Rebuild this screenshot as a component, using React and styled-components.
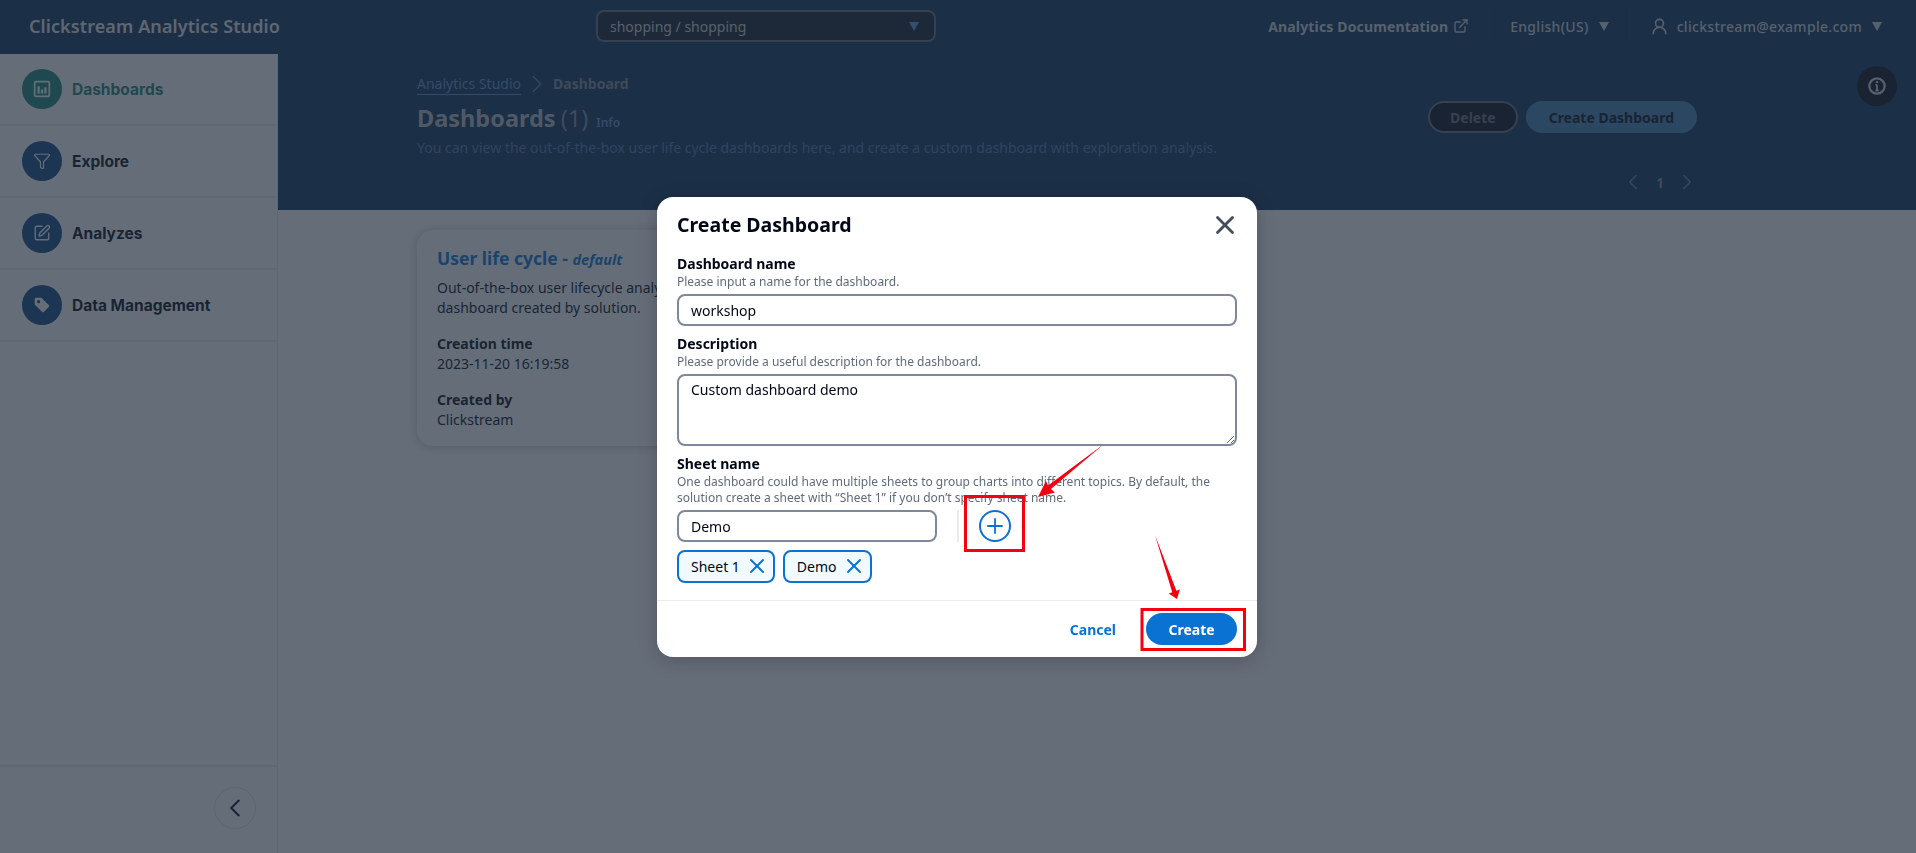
import React from 'react';
import styled, { createGlobalStyle } from 'styled-components';
import { ExternalLink, Funnel, SquarePen, X, Plus, ChevronLeft, ChevronRight, UserRound } from 'lucide-react';

const GlobalStyle = createGlobalStyle`
    html, body { margin:0; padding:0; height:100%; }
    body { font-family:"Noto Sans", "Open Sans", sans-serif; color:#000716; background:#fff; overflow:hidden; }
    * { box-sizing:border-box; }
`;

const Page = styled.div`
    height:100vh;
    display:flex;
    flex-direction:column;
`;

/* top navigation */
const TopBar = styled.header`
    height:54px;
    flex:none;
    background:#08305a;
    display:flex;
    align-items:center;
    padding:0 34px 2px 29px;
    color:#fff;
`;
const Brand = styled.div`
    width:567px;
    font-size:18px;
    font-weight:600;
    letter-spacing:0.1px;
    color:#e6e8ea;
`;
const ProjectSelect = styled.div`
    width:340px;
    height:32px;
    border-radius:8px;
    border:2px solid #5f6b7a;
    background:#0f1b2a;
    display:flex;
    align-items:center;
    justify-content:space-between;
    padding:0 15px 0 12px;
    font-size:14px;
    color:#d1d5db;
`;
const TopRight = styled.div`
    margin-left:auto;
    display:flex;
    align-items:center;
    font-size:14px;
    color:#d1d5db;
`;
const TopItem = styled.div`
    display:flex;
    align-items:center;
    gap:${(p) => p.$gap || 8}px;
    height:36px;
    padding:0 20px;
    font-weight:${(p) => p.$weight || 500};
    letter-spacing:${(p) => p.$spacing || 0.3}px;
    & + & { border-left:1px solid #0d3a6c; }
    &:last-child { padding-right:0; }
`;
const Caret = styled.span`
    width:0;
    height:0;
    border-left:5px solid transparent;
    border-right:5px solid transparent;
    border-top:9px solid ${(p) => p.$color || '#d1d5db'};
    margin-left:${(p) => p.$gap || 0}px;
`;

/* body */
const Body = styled.div`
    flex:1;
    display:flex;
    min-height:0;
    position:relative;
`;
const Sidebar = styled.aside`
    width:278px;
    flex:none;
    border-right:1px solid #e9ebed;
    display:flex;
    flex-direction:column;
`;
const NavItem = styled.div`
    height:72px;
    display:flex;
    align-items:center;
    gap:10px;
    padding:0 0 0 22px;
    border-bottom:2px solid #e9ebed;
    font-family:Inter, sans-serif;
    font-size:15.5px;
    font-weight:700;
    color:${(p) => (p.$active ? '#1a7f78' : '#000716')};
`;
const NavIcon = styled.span`
    width:40px;
    height:40px;
    border-radius:50%;
    background:${(p) => (p.$active ? '#1a8478' : '#0b4480')};
    color:#fff;
    display:flex;
    align-items:center;
    justify-content:center;
`;
const SideFoot = styled.div`
    margin-top:auto;
    height:88px;
    border-top:2px solid #e9ebed;
    display:flex;
    align-items:center;
    justify-content:flex-end;
    padding:0 21px 4px 0;
`;
const CollapseBtn = styled.span`
    width:42px;
    height:42px;
    border-radius:50%;
    border:1px solid #dfe1e4;
    color:#000716;
    display:flex;
    align-items:center;
    justify-content:center;
`;

const Main = styled.main`
    flex:1;
    min-width:0;
`;
const Hero = styled.section`
    height:156px;
    background:#08305a;
    padding:20px 219px 0 139px;
    display:flex;
    justify-content:space-between;
`;
const HeroText = styled.div`
    display:flex;
    flex-direction:column;
`;
const Crumbs = styled.div`
    display:flex;
    align-items:center;
    gap:1px;
    height:20px;
    font-size:14px;
    line-height:20px;
    color:#5f8dcb;
`;
const CrumbLink = styled.span`
    border-bottom:1px solid #5f8dcb;
`;
const CrumbNow = styled.span`
    font-weight:700;
    color:#7d8998;
`;
const Heading = styled.h1`
    margin:8px 0 0;
    font-size:23.5px;
    line-height:32px;
    font-weight:700;
    color:#b5bbc4;
    display:flex;
    align-items:baseline;
`;
const Count = styled.span`
    font-weight:400;
    color:#7d8998;
    margin-left:5px;
`;
const InfoLink = styled.span`
    font-size:12px;
    font-weight:600;
    color:#5f8dcb;
    margin-left:8px;
`;
const HeroDesc = styled.p`
    margin:-1px 0 0;
    font-size:14px;
    line-height:20px;
    color:#4a76aa;
`;
const HeroSide = styled.div`
    display:flex;
    flex-direction:column;
    align-items:flex-end;
    padding-top:27px;
`;
const Actions = styled.div`
    display:flex;
    gap:8px;
`;
const HeroButton = styled.span`
    height:32px;
    padding:0 ${(p) => (p.$primary ? 21 : 20)}px;
    border-radius:16px;
    display:flex;
    align-items:center;
    font-size:14px;
    font-weight:700;
    background:${(p) => (p.$primary ? '#3f7fb5' : '#000716')};
    color:${(p) => (p.$primary ? '#000716' : '#5f6b7a')};
    border:2px solid ${(p) => (p.$primary ? '#3f7fb5' : '#5f6b7a')};
`;
const Pager = styled.div`
    display:flex;
    align-items:center;
    gap:10px;
    margin:36px -3px 0 0;
    font-size:14px;
    font-weight:700;
    color:#7d8998;
`;
const HelpBadge = styled.span`
    position:absolute;
    top:12px;
    right:19px;
    width:40px;
    height:40px;
    border-radius:50%;
    background:#000716;
    color:#d1d5db;
    display:flex;
    align-items:center;
    justify-content:center;
`;

const Content = styled.div`
    padding:20px 0 0 139px;
`;
const Card = styled.article`
    width:340px;
    height:216px;
    padding:16px 20px;
    border-radius:16px;
    background:#fff;
    box-shadow:0 1px 8px 2px rgba(0,7,22,.16);
    font-size:14px;
    line-height:20px;
`;
const CardTitle = styled.h2`
    margin:0 0 7px;
    font-size:17.5px;
    line-height:24px;
    font-weight:700;
    color:#0972d3;
`;
const CardTag = styled.em`
    font-size:14.5px;
`;
const CardText = styled.p`
    margin:0 0 16px;
    &:last-child { margin-bottom:0; }
`;
const CardLabel = styled.b`
    display:block;
    font-weight:700;
`;

/* modal */
const Overlay = styled.div`
    position:fixed;
    inset:0;
    background:rgba(36,47,62,.7);
    backdrop-filter:blur(0.7px);
    display:flex;
    align-items:center;
    justify-content:center;
`;
const Modal = styled.div`
    position:relative;
    width:600px;
    height:460px;
    margin-right:2px;
    border-radius:16px;
    background:#fff;
    box-shadow:0 4px 20px rgba(0,7,22,.2);
    display:flex;
    flex-direction:column;
`;
const ModalHead = styled.div`
    display:flex;
    justify-content:space-between;
    align-items:center;
    padding:7px 20px 0;
    height:50px;
    color:#414d5c;
    svg { margin-right:-3px; }
`;
const ModalTitle = styled.h2`
    margin:0;
    font-size:19.5px;
    line-height:28px;
    font-weight:700;
    color:#000716;
`;
const ModalBody = styled.div`
    flex:1;
    padding:7px 20px 0;
    display:flex;
    flex-direction:column;
`;
const Field = styled.div`
    margin-bottom:${(p) => p.$after ?? 8}px;
`;
const Label = styled.label`
    display:block;
    font-size:14px;
    line-height:20px;
    font-weight:700;
    color:#000716;
`;
const Hint = styled.div`
    font-size:12px;
    line-height:16px;
    color:#5f6b7a;
    margin-bottom:4px;
`;
const TextInput = styled.input`
    display:block;
    width:${(p) => p.$width || '100%'};
    height:32px;
    padding:1px 12px 0;
    border:2px solid #7d8998;
    border-radius:8px;
    outline:none;
    font:14px "Noto Sans", sans-serif;
    color:#000716;
    background:#fff;
`;
const TextArea = styled.textarea`
    display:block;
    width:100%;
    height:72px;
    padding:4px 12px;
    border:2px solid #7d8998;
    border-radius:8px;
    outline:none;
    font:14px/20px "Noto Sans", sans-serif;
    color:#000716;
`;
const AddRow = styled.div`
    display:flex;
    align-items:center;
`;
const AddSep = styled.span`
    width:2px;
    height:32px;
    background:#e9ebed;
    margin:0 20px;
`;
const AddButton = styled.span`
    width:32px;
    height:32px;
    border-radius:50%;
    border:2px solid #0972d3;
    color:#0972d3;
    display:flex;
    align-items:center;
    justify-content:center;
`;
const Tokens = styled.div`
    display:flex;
    gap:8px;
    margin-top:8px;
`;
const Token = styled.span`
    height:33px;
    padding:0 4px 0 12px;
    border:2px solid #0972d3;
    border-radius:8px;
    background:#f1faff;
    display:flex;
    align-items:center;
    gap:5px;
    font-size:14px;
    color:#000716;
    svg { color:#0972d3; }
`;
const ModalFoot = styled.div`
    height:57px;
    border-top:1px solid #e9ebed;
    display:flex;
    align-items:center;
    justify-content:flex-end;
    gap:30px;
    padding:0 20px;
`;
const TextButton = styled.span`
    padding-top:1px;
    font-size:14px;
    font-weight:700;
    color:#0972d3;
`;
const PrimaryButton = styled.span`
    width:91px;
    height:32px;
    padding-top:1px;
    border-radius:16px;
    background:#0972d3;
    color:#fff;
    display:flex;
    align-items:center;
    justify-content:center;
    font-size:14px;
    font-weight:700;
`;
const Annotations = styled.svg`
    position:absolute;
    left:0;
    top:0;
    width:600px;
    height:460px;
    overflow:visible;
    pointer-events:none;
`;

const BarsIcon = () => (
    <svg width="18" height="18" viewBox="0 0 16 16" fill="none" stroke="currentColor">
        <rect x="1.5" y="1.5" width="13" height="13" rx="1" strokeWidth="1.5" />
        <path d="M5 5.5v6.5M8 8.5v3.5M11 6.5v5.5" strokeWidth="2" />
    </svg>
);

const TagIcon = () => (
    <svg width="18" height="18" viewBox="0 0 16 16" fill="currentColor">
        <path
            fillRule="evenodd"
            d="M1.5 2.5a1 1 0 0 1 1-1h5l6.7 6.7a1 1 0 0 1 0 1.4l-4.6 4.6a1 1 0 0 1-1.4 0L1.5 7.5zM5 3.6a1.4 1.4 0 1 0 0 2.8 1.4 1.4 0 0 0 0-2.8z"
        />
    </svg>
);

const InfoIcon = () => (
    <svg width="18" height="18" viewBox="0 0 16 16" fill="none" stroke="currentColor" strokeWidth="2">
        <circle cx="8" cy="8" r="6.8" />
        <path d="M8 7v5M6.5 12h3M6.5 7H8" strokeWidth="1.6" />
        <path d="M8 3.6v1.8" />
    </svg>
);

const App = () => {
    return (
        <Page>
            <GlobalStyle />
            <TopBar>
                <Brand>Clickstream Analytics Studio</Brand>
                <ProjectSelect>
                    shopping / shopping
                    <Caret $color="#539fe5" />
                </ProjectSelect>
                <TopRight>
                    <TopItem $gap={5} $weight={700} $spacing={0.15}>
                        Analytics Documentation
                        <ExternalLink size={16} strokeWidth={2} />
                    </TopItem>
                    <TopItem $gap={10}>
                        English(US)
                        <Caret />
                    </TopItem>
                    <TopItem>
                        <UserRound size={19} strokeWidth={2} />
                        clickstream@example.com
                        <Caret $gap={2} />
                    </TopItem>
                </TopRight>
            </TopBar>
            <Body>
                <Sidebar>
                    <NavItem $active>
                        <NavIcon $active><BarsIcon /></NavIcon>
                        Dashboards
                    </NavItem>
                    <NavItem>
                        <NavIcon><Funnel size={18} strokeWidth={1.6} /></NavIcon>
                        Explore
                    </NavItem>
                    <NavItem>
                        <NavIcon><SquarePen size={18} strokeWidth={1.8} /></NavIcon>
                        Analyzes
                    </NavItem>
                    <NavItem>
                        <NavIcon><TagIcon /></NavIcon>
                        Data Management
                    </NavItem>
                    <SideFoot>
                        <CollapseBtn><ChevronLeft size={30} strokeWidth={1.6} /></CollapseBtn>
                    </SideFoot>
                </Sidebar>
                <Main>
                    <Hero>
                        <HeroText>
                            <Crumbs>
                                <CrumbLink>Analytics Studio</CrumbLink>
                                <ChevronRight size={30} strokeWidth={1.2} color="#5f7fa8" />
                                <CrumbNow>Dashboard</CrumbNow>
                            </Crumbs>
                            <Heading>
                                Dashboards<Count>(1)</Count>
                                <InfoLink>Info</InfoLink>
                            </Heading>
                            <HeroDesc>You can view the out-of-the-box user life cycle dashboards here, and create a custom dashboard with exploration analysis.</HeroDesc>
                        </HeroText>
                        <HeroSide>
                            <Actions>
                                <HeroButton>Delete</HeroButton>
                                <HeroButton $primary>Create Dashboard</HeroButton>
                            </Actions>
                            <Pager>
                                <ChevronLeft size={26} strokeWidth={1.5} color="#5f7fa8" />
                                1
                                <ChevronRight size={26} strokeWidth={1.5} color="#5f7fa8" />
                            </Pager>
                        </HeroSide>
                    </Hero>
                    <Content>
                        <Card>
                            <CardTitle>User life cycle - <CardTag>default</CardTag></CardTitle>
                            <CardText>Out-of-the-box user lifecycle analysis<br />dashboard created by solution.</CardText>
                            <CardText>
                                <CardLabel>Creation time</CardLabel>
                                2023-11-20 16:19:58
                            </CardText>
                            <CardText>
                                <CardLabel>Created by</CardLabel>
                                Clickstream
                            </CardText>
                        </Card>
                    </Content>
                </Main>
                <HelpBadge><InfoIcon /></HelpBadge>
            </Body>
            <Overlay>
                <Modal>
                    <ModalHead>
                        <ModalTitle>Create Dashboard</ModalTitle>
                        <X size={30} strokeWidth={2.2} />
                    </ModalHead>
                    <ModalBody>
                        <Field>
                            <Label>Dashboard name</Label>
                            <Hint>Please input a name for the dashboard.</Hint>
                            <TextInput readOnly value="workshop" />
                        </Field>
                        <Field>
                            <Label>Description</Label>
                            <Hint>Please provide a useful description for the dashboard.</Hint>
                            <TextArea readOnly value="Custom dashboard demo" />
                        </Field>
                        <Field $after={0}>
                            <Label>Sheet name</Label>
                            <Hint>One dashboard could have multiple sheets to group charts into different topics. By default, the solution create a sheet with “Sheet 1” if you don’t specify sheet name.</Hint>
                            <AddRow>
                                <TextInput readOnly value="Demo" $width="260px" />
                                <AddSep />
                                <AddButton><Plus size={24} strokeWidth={1.8} /></AddButton>
                            </AddRow>
                            <Tokens>
                                <Token>Sheet 1 <X size={24} strokeWidth={1.9} /></Token>
                                <Token>Demo <X size={24} strokeWidth={1.9} /></Token>
                            </Tokens>
                        </Field>
                    </ModalBody>
                    <ModalFoot>
                        <TextButton>Cancel</TextButton>
                        <PrimaryButton>Create</PrimaryButton>
                    </ModalFoot>
                    <Annotations viewBox="0 0 600 460">
                        <rect x="308.5" y="299.5" width="58" height="54" fill="none" stroke="#f5000f" strokeWidth="3" />
                        <rect x="485" y="412.5" width="102.5" height="40" fill="none" stroke="#f5000f" strokeWidth="3" />
                        <polygon fill="#f5000f" points="447,247 393.9,292 398,295.5 381,300 389,284 391,288.5" />
                        <polygon fill="#f5000f" points="498,338 519.4,393.8 522.9,392.5 520,402 511.7,396.5 515.2,395.2" />
                    </Annotations>
                </Modal>
            </Overlay>
        </Page>
    );
};

export default App;
